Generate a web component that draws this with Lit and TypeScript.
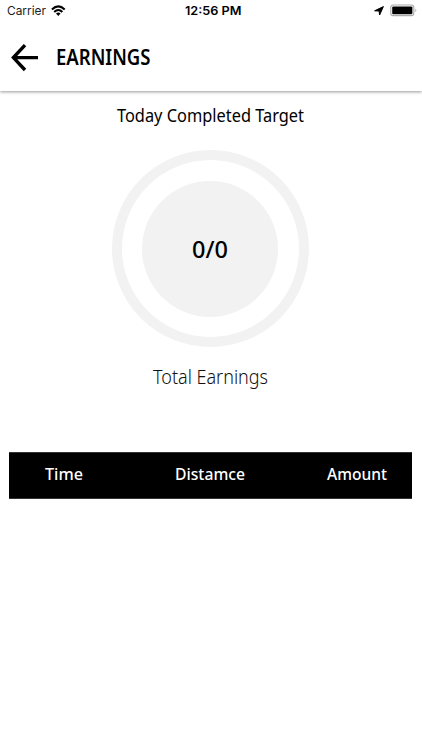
import { LitElement, html, css, svg } from "lit";
import { customElement, property } from "lit/decorators.js";

@customElement("fit-text")
class FitText extends LitElement {
  @property() text = "";
  @property({ type: Number }) width = 100;
  @property({ type: Number }) size = 16;

  static styles = css`
    :host { display: block; flex: none; }
    .line { display: block; overflow: visible; }
    .glyphs { fill: currentColor; }
  `;

  render() {
    const h = Math.round(this.size * 1.2);
    return html`<svg class="line" width=${this.width} height=${h}>
      ${svg`<text class="glyphs" x="0" y=${this.size} font-size=${this.size}
        textLength=${this.width} lengthAdjust="spacingAndGlyphs">${this.text}</text>`}
    </svg>`;
  }
}

@customElement("app-root")
class AppRoot extends LitElement {
  static styles = css`
    :host {
      display: block;
      height: 750px;
      overflow: hidden;
      background: #fff;
      color: #000;
      font-family: "Noto Sans", "Open Sans", sans-serif;
    }
    .top {
      height: 91px;
      background: #fff;
      box-shadow: 0 1px 3px rgba(0, 0, 0, 0.4);
    }
    .status {
      display: grid;
      grid-template-columns: 1fr auto 1fr;
      align-items: start;
      height: 22px;
      padding: 0 5px 0 7px;
      box-sizing: border-box;
      font-family: Inter, "Liberation Sans", sans-serif;
    }
    .left, .right { display: flex; gap: 5px; }
    .right { justify-content: flex-end; gap: 6px; }
    .carrier { margin-top: 3px; color: #222; }
    .clock { margin-top: 3px; margin-left: 2px; font-weight: 600; }
    .wifi { margin-top: 5px; }
    .arrow { margin-top: 6px; }
    .battery { margin-top: 4px; }
    .bar { display: flex; padding-left: 11px; }
    .back { margin-top: 22px; margin-right: 17px; }
    .title { margin-top: 22px; font-weight: 600; }
    .body { display: flex; flex-direction: column; align-items: center; }
    .target { margin-top: 12px; margin-right: 1px; font-weight: 450; }
    .ring {
      display: flex;
      align-items: center;
      justify-content: center;
      box-sizing: border-box;
      width: 197px;
      height: 197px;
      margin-top: 25px;
      margin-right: 1px;
      border: 10px solid #f2f2f2;
      border-radius: 50%;
    }
    .disc {
      display: flex;
      align-items: center;
      justify-content: center;
      width: 136px;
      height: 136px;
      margin-right: 1px;
      border-radius: 50%;
      background: #f2f2f2;
      font-weight: 550;
    }
    .total { margin-top: 17px; margin-right: 2px; font-weight: 300; color: #111; }
    .head {
      display: flex;
      align-self: stretch;
      justify-content: space-between;
      box-sizing: border-box;
      height: 47px;
      margin: 64px 10px 0 9px;
      padding: 10px 25px 0 36px;
      border: 1px solid #333;
      border-width: 1px 0;
      background: #000;
      color: #fff;
      font-weight: 550;
    }
    .mid { margin-left: 10px; }
  `;

  render() {
    return html`
      <header class="top">
        <div class="status">
          <div class="left">
            <fit-text class="carrier" text="Carrier" width="39" size="12"></fit-text>
            <svg class="wifi" width="15" height="12" viewBox="0 0 15 12" fill="none" stroke="#000" stroke-width="2.1">
              <path d="M.9 4.4Q7.3 -1.6 13.7 4.4" />
              <path d="M3.2 6.9Q7.3 3.1 11.4 6.9" />
              <path d="M5 8.5Q7.3 6.5 9.6 8.5L7.3 10.9Z" fill="#000" stroke="none" />
            </svg>
          </div>
          <fit-text class="clock" text="12:56 PM" width="56.5" size="12"></fit-text>
          <div class="right">
            <svg class="arrow" width="10" height="10" viewBox="0 0 10 10"><path d="M9.4 .6L5.6 9L5.1 5L.6 4.8Z" stroke="#000" stroke-width="1" stroke-linejoin="round" /></svg>
            <svg class="battery" width="27" height="13" viewBox="0 0 27 13">
              <rect x=".8" y="1" width="23" height="10.6" rx="2.4" fill="#fff" stroke="#aaa" stroke-width="1.1" />
              <rect x="2.2" y="2.4" width="20.2" height="7.8" rx="1" />
              <path d="M25.3 4.4Q27.2 6.3 25.3 8.2Z" fill="#aaa" />
            </svg>
          </div>
        </div>
        <div class="bar">
          <svg class="back" width="28" height="28" viewBox="0 0 28 28" fill="none" stroke="#000" stroke-width="3.4">
            <path d="M14 1.2L2.4 13.6L14 26M2.4 13.6H27" />
          </svg>
          <fit-text class="title" text="EARNINGS" width="94.5" size="21"></fit-text>
        </div>
      </header>
      <main class="body">
        <fit-text class="target" text="Today Completed Target" width="187" size="18.5"></fit-text>
        <div class="ring">
          <div class="disc"><fit-text text="0/0" width="36" size="24"></fit-text></div>
        </div>
        <fit-text class="total" text="Total Earnings" width="115" size="20"></fit-text>
        <div class="head">
          <fit-text text="Time" width="38" size="17"></fit-text>
          <fit-text class="mid" text="Distamce" width="70" size="17"></fit-text>
          <fit-text text="Amount" width="60" size="17"></fit-text>
        </div>
      </main>
    `;
  }
}
